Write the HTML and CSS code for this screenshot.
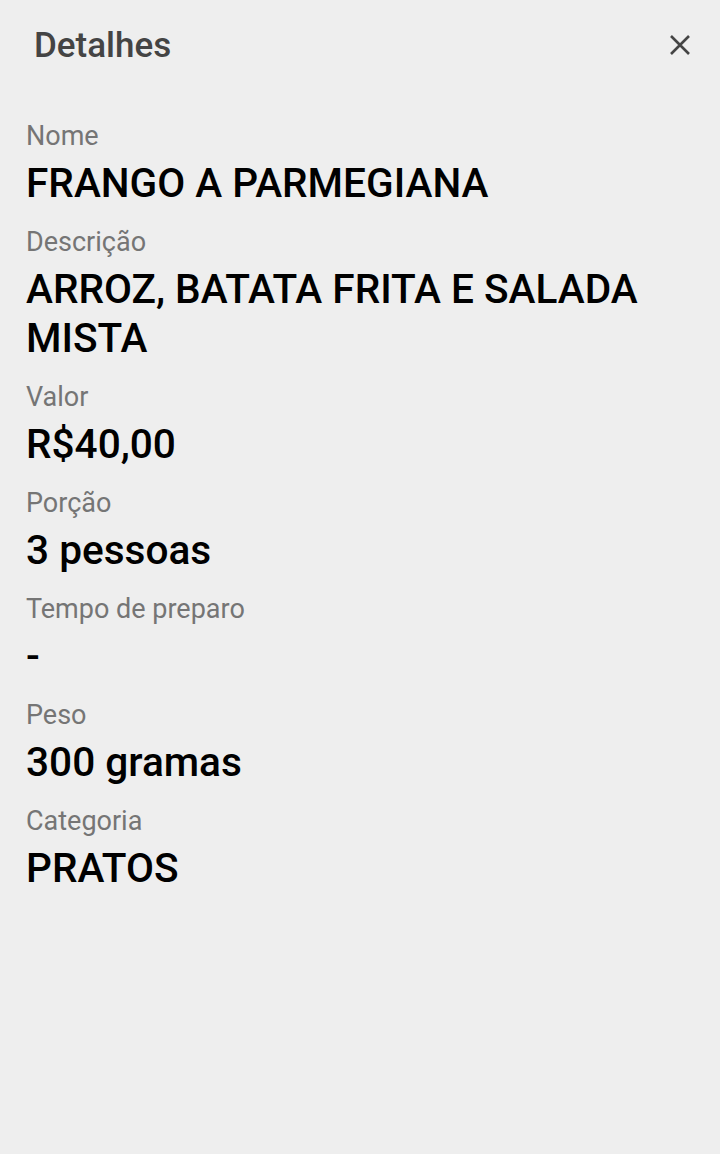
FILE: index.html
```html
<!DOCTYPE html>
<html lang="pt-BR">
<head>
  <meta charset="UTF-8">
  <meta name="viewport" content="width=device-width, initial-scale=1.0">
  <title>Detalhes</title>
  <link rel="stylesheet" href="styles.css">
</head>
<body>

<div class="sheet">
  <div class="header">
    <h1 class="title">Detalhes</h1>
    <button class="close" aria-label="Fechar">
      <svg width="24" height="24" viewBox="0 0 24 24">
        <path d="M3 3 L21 21 M21 3 L3 21" stroke="#444" stroke-width="2.6" fill="none"/>
      </svg>
    </button>
  </div>

  <div class="fields">
    <div class="field">
      <div class="label">Nome</div>
      <div class="value">FRANGO A PARMEGIANA</div>
    </div>
    <div class="field">
      <div class="label">Descrição</div>
      <div class="value">ARROZ, BATATA FRITA E SALADA MISTA</div>
    </div>
    <div class="field">
      <div class="label">Valor</div>
      <div class="value">R$40,00</div>
    </div>
    <div class="field">
      <div class="label">Porção</div>
      <div class="value">3 pessoas</div>
    </div>
    <div class="field">
      <div class="label">Tempo de preparo</div>
      <div class="value">-</div>
    </div>
    <div class="field">
      <div class="label">Peso</div>
      <div class="value">300 gramas</div>
    </div>
    <div class="field">
      <div class="label">Categoria</div>
      <div class="value">PRATOS</div>
    </div>
  </div>
</div>

</body>
</html>
```

FILE: styles.css
```css
body {
  font-family: Roboto, "Noto Sans", Arial, sans-serif;
  background-color: #eeeeee;
  margin: 0;
  padding: 0;
  min-height: 100vh;
}
.sheet {
  padding: 0 26px;
}
.header {
  display: flex;
  justify-content: space-between;
  align-items: center;
  height: 90px;
}
.title {
  margin: 0 0 0 8px;
  font-size: 35px;
  font-weight: 500;
  color: #444444;
}
.close {
  background: none;
  border: none;
  padding: 0;
  margin-right: 2px;
  width: 24px;
  height: 24px;
  cursor: pointer;
}
.fields {
  display: flex;
  flex-direction: column;
  gap: 17px;
  padding-top: 29px;
}
.label {
  font-size: 27px;
  line-height: 34px;
  color: #757575;
  margin-bottom: 6px;
}
.value {
  font-size: 40.6px;
  line-height: 49px;
  font-weight: 500;
  color: #000000;
}
```
